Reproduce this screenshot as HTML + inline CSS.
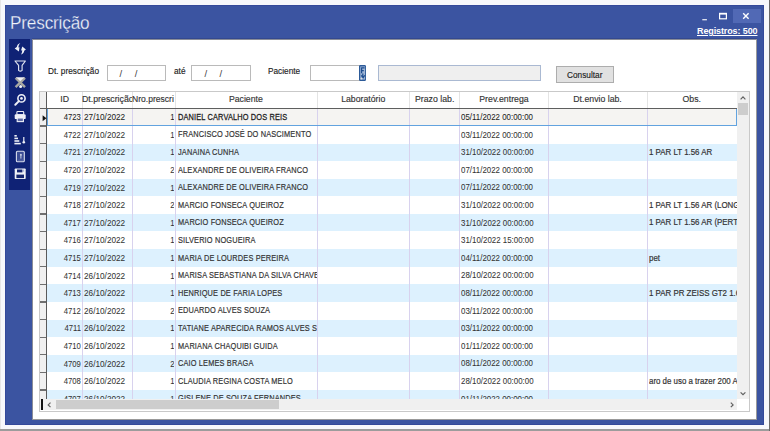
<!DOCTYPE html>
<html><head><meta charset="utf-8">
<style>
*{margin:0;padding:0;box-sizing:border-box}
html,body{width:770px;height:431px;overflow:hidden;background:#f7f8fb;font-family:"Liberation Sans",sans-serif}
.abs{position:absolute}
#edgeL{position:absolute;left:0;top:0;width:1px;height:431px;background:#e6e6e6}
#edgeR{position:absolute;left:768.6px;top:0;width:1.4px;height:431px;background:#6a6a6a}
#edgeB{position:absolute;left:0;top:428.9px;width:768.6px;height:2.1px;background:#9c9c9c}
#frame{position:absolute;left:5.4px;top:5.4px;width:759.1px;height:419.3px;background:#3b54a1;box-shadow:inset 0 0 0 1px #34499a}
#title{position:absolute;left:9.6px;top:12.4px;font-size:19px;color:#f2f5fb;-webkit-text-stroke:0.28px #3b54a1;letter-spacing:-0.2px;white-space:nowrap;transform:scaleX(0.905);transform-origin:0 0}
#closebtn{position:absolute;left:732.6px;top:8.7px;width:28.3px;height:14px;background:#5169b5}
#reg{position:absolute;left:697.2px;top:26.1px;transform:scaleX(0.965);transform-origin:0 0;font-size:9.3px;font-weight:bold;color:#fff;text-decoration:underline;white-space:nowrap;letter-spacing:-0.1px}
#side{position:absolute;left:9px;top:39px;width:20.6px;height:150.7px;background:#0f2275}
#panel{position:absolute;left:32.3px;top:38.8px;width:724.8px;height:381px;background:#fff;border:1px solid #8a8d98;border-right-color:#9a9a9a;border-bottom-color:#9a9a9a;box-shadow:0 -1px 0 #34498f}
.lbl{position:absolute;font-size:9.3px;color:#222;-webkit-text-stroke:0.15px #222;white-space:nowrap;transform:scaleX(0.89);transform-origin:0 0}
.inp{position:absolute;background:#fff;border:1px solid #bababa}
.slash{position:absolute;font-size:9.5px;color:#3a3a3a}
#grid{position:absolute;left:39.3px;top:90.6px;width:711px;height:321.5px;border:1px solid #c9c9c9;background:#fff}
#gc{position:absolute;left:0;top:0;width:737.4px;height:398.8px;overflow:hidden}
.row{position:absolute;left:46.5px;width:691px;height:17.6px}
.t{position:absolute;height:17.6px;line-height:17.6px;font-size:9.2px;color:#333;-webkit-text-stroke:0.2px #333;white-space:nowrap;overflow:hidden}
.t span{display:inline-block;transform-origin:0 50%}
.t.r{text-align:right}
.t.r span{transform-origin:100% 50%}
.t span.n{font-size:9.8px;letter-spacing:0px;transform:scaleX(0.785);position:relative;top:-0.6px}
.t span.d{font-size:9.8px;letter-spacing:0px;transform:scaleX(0.84);position:relative;top:-0.6px}
.t span.nm{font-size:9.9px;letter-spacing:0.2px;transform:scaleX(0.748);position:relative;top:-0.9px}
.t span.dt{font-size:9.8px;letter-spacing:0px;transform:scaleX(0.807);position:relative;top:-0.65px}
.t span.ob{font-size:9.2px;letter-spacing:0px;transform:scaleX(0.86);position:relative;top:0px}

.sel{color:#222;-webkit-text-stroke:0.25px #222}
.t span.n,.t span.d,.t span.dt{-webkit-text-stroke-width:0.05px}
.t.sel span.nm{-webkit-text-stroke-width:0.3px}
.rhsep{position:absolute;left:40.3px;width:6.2px;height:1.3px;background:#6f6f6f}
.cdiv{position:absolute;top:108.3px;height:291px;width:1px;background:#d8d2ee}
.hdiv{position:absolute;top:91.6px;height:16.4px;width:1px;background:#e4e4e4}
.h{position:absolute;top:91.2px;margin-left:-0.3px;height:17px;line-height:17px;font-size:9.2px;color:#333;-webkit-text-stroke:0.15px #333;text-align:center;white-space:nowrap;overflow:hidden}
.h span{display:inline-block;transform:scaleX(0.95)}
.h.hl{text-align:left}
.h.hl span{transform-origin:0 50%;transform:scaleX(0.93)}
</style></head><body>
<div id="edgeL"></div><div id="edgeR"></div><div id="edgeB"></div>
<div id="frame"></div>
<div id="title">Prescrição</div>
<div id="closebtn"></div>
<svg class="abs" style="left:0;top:0" width="770" height="40">
  <path d="M743.2 13.3 L748.6 18.7 M748.6 13.3 L743.2 18.7" stroke="#fff" stroke-width="1.4"/>
  <rect x="719.6" y="13.4" width="6.8" height="5.4" fill="none" stroke="#fff" stroke-width="1.2"/>
  <rect x="719.6" y="13" width="6.8" height="1.6" fill="#fff"/>
  <rect x="702.3" y="19.2" width="4.6" height="1.1" fill="#fff"/>
</svg>
<div id="reg">Registros: 500</div>
<div id="side"></div>
<div id="panel"></div>
<svg class="abs" style="left:0;top:0" width="40" height="200">
 <g fill="#eef0f7" stroke="none">
  <!-- refresh -->
 </g>
 <path fill="#eef0f7" d="M20.3 43.1 C18.2 43.8 17.0 45.2 16.8 47.0 L14.7 48.4 L18.9 51.5 L19.5 47.2 L18.4 47.5 C18.5 45.8 19.1 44.3 20.3 43.1 Z"/>
 <path fill="#eef0f7" d="M20.9 54.6 C23.0 53.9 24.1 52.5 24.2 50.8 L25.9 49.5 L22.3 46.4 L21.0 50.5 L22.2 50.3 C22.2 52.0 21.7 53.5 20.9 54.6 Z"/>
 <!-- funnel -->
 <path d="M15 61 H25.4 L22.1 65.4 V70.4 Q20.3 71.8 18.6 70.4 V65.4 Z" fill="none" stroke="#dfe3ef" stroke-width="1.15" stroke-linejoin="round"/>
 <!-- hourglass -->
 <path d="M15.6 77.8 L25 87.2 M25 77.8 L15.6 87.2" stroke="#a8a8a2" stroke-width="2.4"/>
 <path d="M16 77.3 H24.6 L20.3 81.2 Z" fill="#f2f2f2"/>
 <circle cx="20.6" cy="86.4" r="1.5" fill="#f2f2f2"/>
 <!-- magnifier -->
 <circle cx="21.5" cy="98.4" r="3.6" fill="none" stroke="#eef0f7" stroke-width="1.6"/>
 <circle cx="21.5" cy="98.4" r="1.35" fill="#eef0f7"/>
 <path d="M18.9 101.1 L15.3 104.7" stroke="#eef0f7" stroke-width="2" stroke-linecap="round"/>
 <!-- printer -->
 <rect x="16.9" y="111.5" width="6.8" height="3.2" rx="0.8" fill="none" stroke="#eef0f7" stroke-width="1.1"/>
 <rect x="14.7" y="114.3" width="11" height="4.8" rx="1.2" fill="#eef0f7"/>
 <rect x="17.2" y="118" width="6.2" height="3.6" fill="#5d6aa6" stroke="#eef0f7" stroke-width="1.1"/>
 <!-- sort -->
 <g fill="#eef0f7">
  <rect x="14.4" y="135" width="2.4" height="1.6"/>
  <rect x="14.4" y="137.6" width="3.6" height="1.6"/>
  <rect x="14.4" y="140.2" width="4.9" height="1.6"/>
  <rect x="14.4" y="142.8" width="6.4" height="1.6"/>
  <rect x="23.2" y="137" width="1.2" height="4.5"/>
  <circle cx="23.8" cy="142.3" r="1.3"/>
 </g>
 <!-- document -->
 <rect x="16.4" y="151.3" width="7.9" height="10.5" rx="1" fill="#3c4d95" stroke="#d9ddec" stroke-width="1.1"/>
 <circle cx="20.9" cy="154.8" r="1" fill="#c9cfe4"/>
 <rect x="20.4" y="155" width="1" height="3.6" fill="#c9cfe4"/>
 <rect x="17.8" y="159.7" width="5.2" height="0.9" fill="#5a69a8"/>
 <!-- floppy -->
 <rect x="14.7" y="168.5" width="11" height="10.5" rx="0.8" fill="#eef0f7"/>
 <rect x="17" y="169.5" width="5.4" height="2.9" fill="#13246f"/>
 <rect x="22.9" y="169.5" width="1.2" height="2.2" fill="#a9b2d6"/>
 <rect x="16.4" y="174.6" width="7.6" height="3.5" fill="#13246f"/>
</svg>



<div class="lbl" style="left:48px;top:66.1px">Dt. prescrição</div>
<div class="inp" style="left:106.7px;top:65.1px;width:59.1px;height:15.8px"></div>
<div class="lbl" style="left:174.4px;top:66.1px">até</div>
<div class="inp" style="left:191.3px;top:65.2px;width:59.4px;height:15.8px"></div>
<div class="lbl" style="left:267.9px;top:66.1px">Paciente</div>
<div class="inp" style="left:310px;top:65.1px;width:49.5px;height:16px"></div>
<div class="abs" style="left:358.9px;top:65.1px;width:7.5px;height:15.9px;background:#3a66a6;border:1px solid #2c5a98;border-radius:1px"></div>
<svg class="abs" style="left:0;top:0" width="380" height="90">
 <rect x="360.3" y="66.5" width="4.8" height="13" fill="#9fb6d6"/>
 <path d="M361.2 67.8 H364.6 M361.6 67.8 V73.2 M361.6 70.6 H363.8 M362.8 73.6 V77.8 M361.2 75.4 L363.2 77.8 L364.8 75.2" stroke="#1f4e8f" stroke-width="1.2" fill="none"/>
 <rect x="360.6" y="78.2" width="1.6" height="1.2" fill="#f0ece0"/>
</svg>
<div class="inp" style="left:377.6px;top:65.1px;width:163.2px;height:15.8px;background:#efefef;border:1.4px solid #aab9d2"></div>
<div class="abs" style="left:556px;top:66px;width:57.5px;height:16.9px;background:#e1e1e1;border:1px solid #adadad"></div>
<div class="lbl" style="left:566.7px;top:70px">Consultar</div>
<!-- date slashes -->
<div class="slash" style="left:119.5px;top:67.5px">/</div>
<div class="slash" style="left:134.7px;top:67.5px">/</div>
<div class="slash" style="left:204.4px;top:67.5px">/</div>
<div class="slash" style="left:219.4px;top:67.5px">/</div>

<div id="grid"></div>
<!-- row header column bg -->
<div class="abs" style="left:40.3px;top:91.6px;width:6.2px;height:307.2px;background:#f0f0f0"></div>
<div id="gc">
<div class="row" style="top:108.30px;background:#f5f4f2"></div>
<div class="t r sel" style="top:108.70px;left:46.50px;width:34.70px"><span class="n">4723</span></div>
<div class="t sel" style="top:108.70px;left:84.10px;width:48.70px"><span class="d">27/10/2022</span></div>
<div class="t r sel" style="top:108.70px;left:132.80px;width:41.20px"><span class="n">1</span></div>
<div class="t sel" style="top:108.70px;left:177.90px;width:140.30px"><span class="nm">DANIEL CARVALHO DOS REIS</span></div>
<div class="t sel" style="top:108.70px;left:461.20px;width:87.50px"><span class="dt">05/11/2022 00:00:00</span></div>
<div class="row" style="top:125.90px;background:#ffffff"></div>
<div class="t r" style="top:126.30px;left:46.50px;width:34.70px"><span class="n">4722</span></div>
<div class="t" style="top:126.30px;left:84.10px;width:48.70px"><span class="d">27/10/2022</span></div>
<div class="t r" style="top:126.30px;left:132.80px;width:41.20px"><span class="n">1</span></div>
<div class="t" style="top:126.30px;left:177.90px;width:140.30px"><span class="nm">FRANCISCO JOSÉ DO NASCIMENTO</span></div>
<div class="t" style="top:126.30px;left:461.20px;width:87.50px"><span class="dt">03/11/2022 00:00:00</span></div>
<div class="row" style="top:143.50px;background:#ddf1fe"></div>
<div class="t r" style="top:143.90px;left:46.50px;width:34.70px"><span class="n">4721</span></div>
<div class="t" style="top:143.90px;left:84.10px;width:48.70px"><span class="d">27/10/2022</span></div>
<div class="t r" style="top:143.90px;left:132.80px;width:41.20px"><span class="n">1</span></div>
<div class="t" style="top:143.90px;left:177.90px;width:140.30px"><span class="nm">JANAINA CUNHA</span></div>
<div class="t" style="top:143.90px;left:461.20px;width:87.50px"><span class="dt">31/10/2022 00:00:00</span></div>
<div class="t" style="top:143.90px;left:649.20px;width:88.20px"><span class="ob">1 PAR LT 1.56 AR</span></div>
<div class="row" style="top:161.10px;background:#ffffff"></div>
<div class="t r" style="top:161.50px;left:46.50px;width:34.70px"><span class="n">4720</span></div>
<div class="t" style="top:161.50px;left:84.10px;width:48.70px"><span class="d">27/10/2022</span></div>
<div class="t r" style="top:161.50px;left:132.80px;width:41.20px"><span class="n">2</span></div>
<div class="t" style="top:161.50px;left:177.90px;width:140.30px"><span class="nm">ALEXANDRE DE OLIVEIRA FRANCO</span></div>
<div class="t" style="top:161.50px;left:461.20px;width:87.50px"><span class="dt">07/11/2022 00:00:00</span></div>
<div class="row" style="top:178.70px;background:#ddf1fe"></div>
<div class="t r" style="top:179.10px;left:46.50px;width:34.70px"><span class="n">4719</span></div>
<div class="t" style="top:179.10px;left:84.10px;width:48.70px"><span class="d">27/10/2022</span></div>
<div class="t r" style="top:179.10px;left:132.80px;width:41.20px"><span class="n">1</span></div>
<div class="t" style="top:179.10px;left:177.90px;width:140.30px"><span class="nm">ALEXANDRE DE OLIVEIRA FRANCO</span></div>
<div class="t" style="top:179.10px;left:461.20px;width:87.50px"><span class="dt">07/11/2022 00:00:00</span></div>
<div class="row" style="top:196.30px;background:#ffffff"></div>
<div class="t r" style="top:196.70px;left:46.50px;width:34.70px"><span class="n">4718</span></div>
<div class="t" style="top:196.70px;left:84.10px;width:48.70px"><span class="d">27/10/2022</span></div>
<div class="t r" style="top:196.70px;left:132.80px;width:41.20px"><span class="n">2</span></div>
<div class="t" style="top:196.70px;left:177.90px;width:140.30px"><span class="nm">MARCIO FONSECA QUEIROZ</span></div>
<div class="t" style="top:196.70px;left:461.20px;width:87.50px"><span class="dt">31/10/2022 00:00:00</span></div>
<div class="t" style="top:196.70px;left:649.20px;width:88.20px"><span class="ob">1 PAR LT 1.56 AR (LONGE)</span></div>
<div class="row" style="top:213.90px;background:#ddf1fe"></div>
<div class="t r" style="top:214.30px;left:46.50px;width:34.70px"><span class="n">4717</span></div>
<div class="t" style="top:214.30px;left:84.10px;width:48.70px"><span class="d">27/10/2022</span></div>
<div class="t r" style="top:214.30px;left:132.80px;width:41.20px"><span class="n">1</span></div>
<div class="t" style="top:214.30px;left:177.90px;width:140.30px"><span class="nm">MARCIO FONSECA QUEIROZ</span></div>
<div class="t" style="top:214.30px;left:461.20px;width:87.50px"><span class="dt">31/10/2022 00:00:00</span></div>
<div class="t" style="top:214.30px;left:649.20px;width:88.20px"><span class="ob">1 PAR LT 1.56 AR (PERTO)</span></div>
<div class="row" style="top:231.50px;background:#ffffff"></div>
<div class="t r" style="top:231.90px;left:46.50px;width:34.70px"><span class="n">4716</span></div>
<div class="t" style="top:231.90px;left:84.10px;width:48.70px"><span class="d">27/10/2022</span></div>
<div class="t r" style="top:231.90px;left:132.80px;width:41.20px"><span class="n">1</span></div>
<div class="t" style="top:231.90px;left:177.90px;width:140.30px"><span class="nm">SILVERIO NOGUEIRA</span></div>
<div class="t" style="top:231.90px;left:461.20px;width:87.50px"><span class="dt">31/10/2022 15:00:00</span></div>
<div class="row" style="top:249.10px;background:#ddf1fe"></div>
<div class="t r" style="top:249.50px;left:46.50px;width:34.70px"><span class="n">4715</span></div>
<div class="t" style="top:249.50px;left:84.10px;width:48.70px"><span class="d">27/10/2022</span></div>
<div class="t r" style="top:249.50px;left:132.80px;width:41.20px"><span class="n">1</span></div>
<div class="t" style="top:249.50px;left:177.90px;width:140.30px"><span class="nm">MARIA DE LOURDES PEREIRA</span></div>
<div class="t" style="top:249.50px;left:461.20px;width:87.50px"><span class="dt">04/11/2022 00:00:00</span></div>
<div class="t" style="top:249.50px;left:649.20px;width:88.20px"><span class="ob">pet</span></div>
<div class="row" style="top:266.70px;background:#ffffff"></div>
<div class="t r" style="top:267.10px;left:46.50px;width:34.70px"><span class="n">4714</span></div>
<div class="t" style="top:267.10px;left:84.10px;width:48.70px"><span class="d">26/10/2022</span></div>
<div class="t r" style="top:267.10px;left:132.80px;width:41.20px"><span class="n">1</span></div>
<div class="t" style="top:267.10px;left:177.90px;width:140.30px"><span class="nm">MARISA SEBASTIANA DA SILVA CHAVES</span></div>
<div class="t" style="top:267.10px;left:461.20px;width:87.50px"><span class="dt">28/10/2022 00:00:00</span></div>
<div class="row" style="top:284.30px;background:#ddf1fe"></div>
<div class="t r" style="top:284.70px;left:46.50px;width:34.70px"><span class="n">4713</span></div>
<div class="t" style="top:284.70px;left:84.10px;width:48.70px"><span class="d">26/10/2022</span></div>
<div class="t r" style="top:284.70px;left:132.80px;width:41.20px"><span class="n">1</span></div>
<div class="t" style="top:284.70px;left:177.90px;width:140.30px"><span class="nm">HENRIQUE DE FARIA LOPES</span></div>
<div class="t" style="top:284.70px;left:461.20px;width:87.50px"><span class="dt">08/11/2022 00:00:00</span></div>
<div class="t" style="top:284.70px;left:649.20px;width:88.20px"><span class="ob">1 PAR PR ZEISS GT2 1.60</span></div>
<div class="row" style="top:301.90px;background:#ffffff"></div>
<div class="t r" style="top:302.30px;left:46.50px;width:34.70px"><span class="n">4712</span></div>
<div class="t" style="top:302.30px;left:84.10px;width:48.70px"><span class="d">26/10/2022</span></div>
<div class="t r" style="top:302.30px;left:132.80px;width:41.20px"><span class="n">2</span></div>
<div class="t" style="top:302.30px;left:177.90px;width:140.30px"><span class="nm">EDUARDO ALVES SOUZA</span></div>
<div class="t" style="top:302.30px;left:461.20px;width:87.50px"><span class="dt">03/11/2022 00:00:00</span></div>
<div class="row" style="top:319.50px;background:#ddf1fe"></div>
<div class="t r" style="top:319.90px;left:46.50px;width:34.70px"><span class="n">4711</span></div>
<div class="t" style="top:319.90px;left:84.10px;width:48.70px"><span class="d">26/10/2022</span></div>
<div class="t r" style="top:319.90px;left:132.80px;width:41.20px"><span class="n">1</span></div>
<div class="t" style="top:319.90px;left:177.90px;width:140.30px"><span class="nm">TATIANE APARECIDA RAMOS ALVES SILVA</span></div>
<div class="t" style="top:319.90px;left:461.20px;width:87.50px"><span class="dt">03/11/2022 00:00:00</span></div>
<div class="row" style="top:337.10px;background:#ffffff"></div>
<div class="t r" style="top:337.50px;left:46.50px;width:34.70px"><span class="n">4710</span></div>
<div class="t" style="top:337.50px;left:84.10px;width:48.70px"><span class="d">26/10/2022</span></div>
<div class="t r" style="top:337.50px;left:132.80px;width:41.20px"><span class="n">1</span></div>
<div class="t" style="top:337.50px;left:177.90px;width:140.30px"><span class="nm">MARIANA CHAQUIBI GUIDA</span></div>
<div class="t" style="top:337.50px;left:461.20px;width:87.50px"><span class="dt">01/11/2022 00:00:00</span></div>
<div class="row" style="top:354.70px;background:#ddf1fe"></div>
<div class="t r" style="top:355.10px;left:46.50px;width:34.70px"><span class="n">4709</span></div>
<div class="t" style="top:355.10px;left:84.10px;width:48.70px"><span class="d">26/10/2022</span></div>
<div class="t r" style="top:355.10px;left:132.80px;width:41.20px"><span class="n">2</span></div>
<div class="t" style="top:355.10px;left:177.90px;width:140.30px"><span class="nm">CAIO LEMES BRAGA</span></div>
<div class="t" style="top:355.10px;left:461.20px;width:87.50px"><span class="dt">08/11/2022 00:00:00</span></div>
<div class="row" style="top:372.30px;background:#ffffff"></div>
<div class="t r" style="top:372.70px;left:46.50px;width:34.70px"><span class="n">4708</span></div>
<div class="t" style="top:372.70px;left:84.10px;width:48.70px"><span class="d">26/10/2022</span></div>
<div class="t r" style="top:372.70px;left:132.80px;width:41.20px"><span class="n">1</span></div>
<div class="t" style="top:372.70px;left:177.90px;width:140.30px"><span class="nm">CLAUDIA REGINA COSTA MELO</span></div>
<div class="t" style="top:372.70px;left:461.20px;width:87.50px"><span class="dt">28/10/2022 00:00:00</span></div>
<div class="t" style="top:372.70px;left:649.20px;width:88.20px"><span class="ob">aro de uso a trazer 200 A</span></div>
<div class="row" style="top:389.90px;background:#ddf1fe"></div>
<div class="t r" style="top:390.30px;left:46.50px;width:34.70px"><span class="n">4707</span></div>
<div class="t" style="top:390.30px;left:84.10px;width:48.70px"><span class="d">26/10/2022</span></div>
<div class="t r" style="top:390.30px;left:132.80px;width:41.20px"><span class="n">1</span></div>
<div class="t" style="top:390.30px;left:177.90px;width:140.30px"><span class="nm">GISLENE DE SOUZA FERNANDES</span></div>
<div class="t" style="top:390.30px;left:461.20px;width:87.50px"><span class="dt">01/11/2022 00:00:00</span></div>
<div class="rhsep" style="top:107.70px"></div>
<div class="rhsep" style="top:125.30px"></div>
<div class="rhsep" style="top:142.90px"></div>
<div class="rhsep" style="top:160.50px"></div>
<div class="rhsep" style="top:178.10px"></div>
<div class="rhsep" style="top:195.70px"></div>
<div class="rhsep" style="top:213.30px"></div>
<div class="rhsep" style="top:230.90px"></div>
<div class="rhsep" style="top:248.50px"></div>
<div class="rhsep" style="top:266.10px"></div>
<div class="rhsep" style="top:283.70px"></div>
<div class="rhsep" style="top:301.30px"></div>
<div class="rhsep" style="top:318.90px"></div>
<div class="rhsep" style="top:336.50px"></div>
<div class="rhsep" style="top:354.10px"></div>
<div class="rhsep" style="top:371.70px"></div>
<div class="rhsep" style="top:389.30px"></div>
<div class="rhsep" style="top:406.90px"></div>
<div class="cdiv" style="left:82.20px"></div>
<div class="hdiv" style="left:82.20px"></div>
<div class="cdiv" style="left:132.30px"></div>
<div class="hdiv" style="left:132.30px"></div>
<div class="cdiv" style="left:175.10px"></div>
<div class="hdiv" style="left:175.10px"></div>
<div class="cdiv" style="left:317.00px"></div>
<div class="hdiv" style="left:317.00px"></div>
<div class="cdiv" style="left:408.90px"></div>
<div class="hdiv" style="left:408.90px"></div>
<div class="cdiv" style="left:459.10px"></div>
<div class="hdiv" style="left:459.10px"></div>
<div class="cdiv" style="left:548.20px"></div>
<div class="hdiv" style="left:548.20px"></div>
<div class="cdiv" style="left:647.10px"></div>
<div class="hdiv" style="left:647.10px"></div>
<div class="h" style="left:46.50px;width:36.20px"><span>ID</span></div>
<div class="h hl" style="left:82.40px;width:50.40px"><span style="transform:scaleX(0.955)">Dt.prescrição</span></div>
<div class="h hl" style="left:132.50px;width:43.10px"><span style="transform:scaleX(0.93)">Nro.prescri</span></div>
<div class="h" style="left:175.60px;width:141.90px"><span>Paciente</span></div>
<div class="h" style="left:317.50px;width:91.90px"><span>Laboratório</span></div>
<div class="h" style="left:409.40px;width:50.20px"><span>Prazo lab.</span></div>
<div class="h" style="left:459.60px;width:89.10px"><span>Prev.entrega</span></div>
<div class="h" style="left:548.70px;width:98.90px"><span>Dt.envio lab.</span></div>
<div class="h" style="left:647.60px;width:89.80px"><span>Obs.</span></div>
</div>
<div class="abs" style="left:46px;top:91.6px;width:1.1px;height:307.2px;background:#5a5a5a"></div>
<div class="abs" style="left:40.3px;top:107.6px;width:697px;height:1.2px;background:#5e5e5e"></div>
<svg class="abs" style="left:0;top:0" width="60" height="130"><path d="M42.6 115.2 L46.4 118.2 L42.6 121.2 Z" fill="#111"/></svg>
<!-- focus rect on row 0 -->
<div class="abs" style="left:47.1px;top:108.6px;width:689.8px;height:17.3px;border:1px solid #62a3df;border-top:none"></div>
<!-- vertical scrollbar -->
<div class="abs" style="left:737.4px;top:91.6px;width:11.9px;height:307.2px;background:#f0f0f0"></div>
<div class="abs" style="left:738px;top:103.1px;width:9.9px;height:11.7px;background:#cdcdcd"></div>
<!-- horizontal scrollbar -->
<div class="abs" style="left:40.3px;top:398.8px;width:697.1px;height:11.5px;background:#f0f0f0"></div>
<div class="abs" style="left:55.6px;top:399.9px;width:223.1px;height:9.2px;background:#cdcdcd"></div>
<div class="abs" style="left:40.5px;top:399px;width:2.4px;height:11px;background:#111"></div>
<div class="abs" style="left:737.4px;top:398.8px;width:11.9px;height:11.2px;background:#fff"></div>
<svg class="abs" style="left:0;top:0" width="770" height="431">
 <path d="M740.6 99.3 L743 96.9 L745.4 99.3" fill="none" stroke="#606060" stroke-width="1.2"/>
 <path d="M740.6 392.3 L743 394.7 L745.4 392.3" fill="none" stroke="#606060" stroke-width="1.2"/>
 <path d="M50.5 402.6 L48.2 404.9 L50.5 407.2" fill="none" stroke="#606060" stroke-width="1.2"/>
 <path d="M730.8 402.6 L733.1 404.9 L730.8 407.2" fill="none" stroke="#606060" stroke-width="1.2"/>
</svg>
</body></html>
